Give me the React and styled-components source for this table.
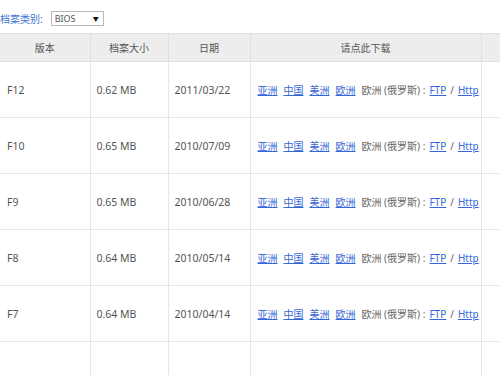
import React from 'react'
import styled, { createGlobalStyle } from 'styled-components';

const rows = [
  { ver: 'F12', size: '0.62 MB', date: '2011/03/22' },
  { ver: 'F10', size: '0.65 MB', date: '2010/07/09' },
  { ver: 'F9', size: '0.65 MB', date: '2010/06/28' },
  { ver: 'F8', size: '0.64 MB', date: '2010/05/14' },
  { ver: 'F7', size: '0.64 MB', date: '2010/04/14' },
];

const regions = ['亚洲', '中国', '美洲', '欧洲'];

const App = () => {
  return (
    <Page>
      <GlobalStyle />
      <Toolbar>
        <Label>档案类别:</Label>
        <Select>
          <span>BIOS</span>
          <Arrow>▼</Arrow>
        </Select>
      </Toolbar>
      <Table>
        <colgroup>
          <col style={{ width: 90 }} />
          <col style={{ width: 78 }} />
          <col style={{ width: 82 }} />
          <col style={{ width: 231 }} />
          <col style={{ width: 60 }} />
        </colgroup>
        <thead>
          <tr>
            <Th>版本</Th>
            <Th>档案大小</Th>
            <Th>日期</Th>
            <Th>请点此下载</Th>
            <Th />
          </tr>
        </thead>
        <tbody>
          {rows.map(r => (
            <tr key={r.ver}>
              <Td first>{r.ver}</Td>
              <Td>{r.size}</Td>
              <Td>{r.date}</Td>
              <Td>
                <Links>
                  {regions.map(name => (
                    <Link key={name} href="#">{name}</Link>
                  ))}
                  <Plain>欧洲 (俄罗斯) :</Plain>
                  <Link href="#" tight>FTP</Link>
                  <Plain>/</Plain>
                  <Link href="#" tight>Http</Link>
                </Links>
              </Td>
              <Td />
            </tr>
          ))}
          <tr>
            <Td last />
            <Td last />
            <Td last />
            <Td last />
            <Td last />
          </tr>
        </tbody>
      </Table>
    </Page>
  )
}

const GlobalStyle = createGlobalStyle`
  body {
    margin: 0;
    background: #fff;
    font-family: "Noto Sans", "Noto Sans CJK SC", sans-serif;
  }
`;

const Page = styled.div`
  width: 500px;
  height: 375px;
  overflow: hidden;
`;

const Toolbar = styled.div`
  height: 33px;
  display: flex;
  align-items: center;
  gap: 8px;
  padding-top: 4px;
  box-sizing: border-box;
`;

const Label = styled.div`
  font-size: 10px;
  color: #3d74d6;
`;

const Select = styled.div`
  width: 53px;
  height: 15px;
  box-sizing: border-box;
  border: 1px solid #b8b8b8;
  display: flex;
  align-items: center;
  justify-content: space-between;
  padding: 0 4px 0 3px;
  font-size: 9px;
  color: #555;
`;

const Arrow = styled.span`
  font-size: 6px;
  color: #111;
`;

const Table = styled.table`
  border-collapse: collapse;
  table-layout: fixed;
  width: 541px;
  font-size: 10.5px;
  color: #555;
`;

const Th = styled.th`
  height: 27px;
  padding: 0;
  background: #ededed;
  border-top: 1px solid #e0e0e0;
  border-bottom: 1px solid #e0e0e0;
  border-left: 1px solid #e0e0e0;
  font-weight: normal;
  font-size: 10px;
  text-align: center;
  color: #555;
  &:first-child {
    border-left: none;
  }
`;

const Td = styled.td`
  height: ${props => props.last ? '40px' : '55px'};
  padding: 0 0 0 ${props => props.first ? '7px' : '6px'};
  border-left: 1px solid #e6e6e6;
  border-bottom: ${props => props.last ? 'none' : '1px solid #e6e6e6'};
  white-space: nowrap;
  overflow: hidden;
  &:first-child {
    border-left: none;
  }
`;

const Links = styled.div`
  display: flex;
  align-items: baseline;
  padding-left: 1px;
  font-size: 10px;
`;

const Link = styled.a`
  color: #3366d6;
  text-decoration: underline;
  margin-right: ${props => props.tight ? '4px' : '6px'};
`;

const Plain = styled.span`
  color: #666;
  margin-right: 4px;
`;

export default App
